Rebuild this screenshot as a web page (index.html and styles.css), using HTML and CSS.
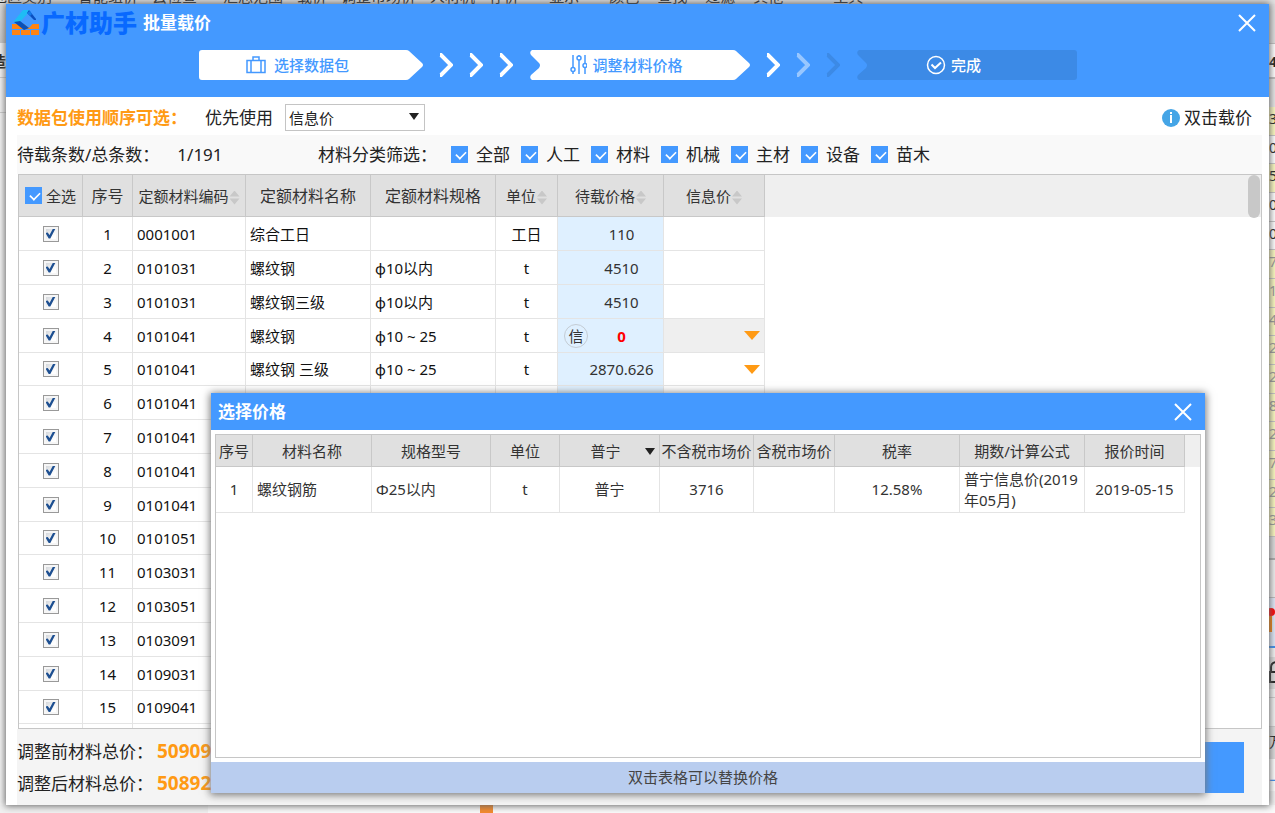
FILE: index.html
```html
<!DOCTYPE html>
<html lang="zh-CN">
<head>
<meta charset="utf-8">
<title>批量载价</title>
<link rel="stylesheet" href="styles.css">
</head>
<body>
<div class="desktop">
  <div class="ribbon">
    <span>地区类别</span><span class="ribbon-wide">智能组价</span><span>云检查</span><span class="ribbon-wide">汇总范围</span><span>载价</span><span>调整市场价</span><span>人材机</span><span>存价</span><span class="ribbon-far">显示</span><span class="ribbon-far">颜色</span><span class="ribbon-near">查找</span><span class="ribbon-near">过滤</span><span class="ribbon-near">其他</span><span class="ribbon-last">工具</span>
  </div>
  <div class="sheet-left"><div class="left-head"></div><div class="left-cell"><b>造</b></div><div class="left-cell"></div></div>
  <div class="sheet-right">
    <div class="r-head"></div>
    <div class="r-title"><b>47</b></div>
    <div class="r-sub"></div>
    <div class="r-rows">
      <span class="y">3</span><span>0</span><span class="y">5</span><span>0</span><span>0</span><span class="y dim">7</span><span class="y dim">1</span><span class="y dim">4</span><span class="y dim">2</span><span class="y dim">2</span><span class="y dim">8</span><span class="y dim">2</span><span class="y dim">7</span><span class="y dim">2</span><span class="y dim">3</span>
    </div>
    <div class="r-scroll"></div>
    <div class="r-gap"></div>
    <div class="r-tab"><svg viewBox="0 0 6 48" width="6" height="48"><path fill="#f57c00" d="M0 18h3v16H0z"/><circle cx="2" cy="14" r="4" fill="#f00"/></svg></div>
    <div class="r-lock"><svg viewBox="0 0 6 31" width="6" height="31" fill="none" stroke="#222" stroke-width="2"><path d="M8 11H1v10h7M2 10V6q0-4 5-5"/></svg></div>
    <div class="r-bar"></div>
    <div class="r-text">万</div>
    <div class="r-text r-link">上</div>
  </div>
  <div class="status"><i></i></div>
</div>

<main class="window">
  <header class="window-head">
    <div class="title-row">
      <svg class="logo" viewBox="0 0 28 26" width="28" height="26">
        <path fill="#ff8412" d="M0 14h27v5H0zM0 20h8v5H0zM9 20h9v5H9zM19 20h8v5h-8z"/>
        <path fill="#4499ff" d="M14 2l10 8-7 8-9-7z"/>
        <path fill="#1ebcf5" d="M11 0h6l1 1-10 11-6 0 0-1z"/>
        <path fill="#0b4fc0" d="M17 0l7 9v1h-2l-7-7z"/>
        <path fill="#0a50b8" d="M2 12l6-1 9 7-5 2z"/>
        <path fill="#1478e8" d="M15 3l3-2 2 3-2 2z"/>
      </svg>
      <span class="brand">广材助手</span>
      <h1>批量载价</h1>
      <button class="close" aria-label="关闭"><svg viewBox="0 0 20 20" width="20" height="20"><path d="M2 2l16 16M18 2L2 18"/></svg></button>
    </div>
    <div class="steps">
      <div class="step">
        <svg class="shape" viewBox="0 0 224 30" preserveAspectRatio="none"><path fill="#fff" d="M3 0h204q2 0 3 1l13 12q2 2 0 4l-13 12q-1 1-3 1H3q-3 0-3-3V3q0-3 3-3z"/></svg>
        <svg class="icon" viewBox="0 0 20 18" width="20" height="18"><path d="M1 4.500h18v12H1zM5 4.500v12M15 4.500v12M7 4V1h6v3"/></svg>
        <span>选择数据包</span>
      </div>
      <svg class="chevron" viewBox="0 0 15 24"><path d="M2 2l1 0 10 10-10 10H2"/></svg>
      <svg class="chevron" viewBox="0 0 15 24"><path d="M2 2l1 0 10 10-10 10H2"/></svg>
      <svg class="chevron" viewBox="0 0 15 24"><path d="M2 2l1 0 10 10-10 10H2"/></svg>
      <div class="step notched">
        <svg class="shape" viewBox="0 0 220 30" preserveAspectRatio="none"><path fill="#fff" d="M2 0h201q2 0 3 1l13 12q2 2 0 4l-13 12q-1 1-3 1H2q-3-2-1-5l8-7q2-3 0-5L1 5q-2-3 1-5z"/></svg>
        <svg class="icon" viewBox="0 0 17 20" width="17" height="20"><path d="M3 0v12M3 17v2M9 5v14M9 0v1M15 0v8M15 13v6"/><circle cx="3" cy="14.500" r="2"/><circle cx="9" cy="3" r="2"/><circle cx="15" cy="10.500" r="2"/></svg>
        <span>调整材料价格</span>
      </div>
      <svg class="chevron" viewBox="0 0 15 24"><path d="M2 2l1 0 10 10-10 10H2"/></svg>
      <svg class="chevron fade" viewBox="0 0 15 24"><path d="M2 2l1 0 10 10-10 10H2"/></svg>
      <svg class="chevron off" viewBox="0 0 15 24"><path d="M2 2l1 0 10 10-10 10H2"/></svg>
      <div class="step notched todo">
        <svg class="shape" viewBox="0 0 220 30" preserveAspectRatio="none"><path fill="#3c8ae6" d="M2 0h215q3 0 3 3v24q0 3-3 3H2q-3-2-1-5l8-7q2-3 0-5L1 5q-2-3 1-5z"/></svg>
        <svg class="icon" viewBox="0 0 20 20" width="20" height="20"><circle cx="10" cy="10" r="8.500"/><path d="M5.500 9.500l3.500 3.500 6-5.500" stroke-width="2"/></svg>
        <span>完成</span>
      </div>
    </div>
  </header>

  <div class="options">
    <strong>数据包使用顺序可选：</strong>
    <label for="prefer">优先使用</label>
    <span class="select-box"><select id="prefer"><option>信息价</option></select></span>
    <span class="hint"><svg viewBox="0 0 18 18" width="18" height="18"><circle cx="9" cy="9" r="9" fill="#45a5e6"/><path fill="#fff" d="M8 3h2v2H8zM8 6h2v8H8z"/></svg>双击载价</span>
  </div>

  <div class="content">
    <div class="filters">
      <span class="count">待载条数/总条数：<span>1/191</span></span>
      <span class="filter-name">材料分类筛选：</span>
      <label><input type="checkbox" class="tick" checked>全部</label>
      <label><input type="checkbox" class="tick" checked>人工</label>
      <label><input type="checkbox" class="tick" checked>材料</label>
      <label><input type="checkbox" class="tick" checked>机械</label>
      <label><input type="checkbox" class="tick" checked>主材</label>
      <label><input type="checkbox" class="tick" checked>设备</label>
      <label><input type="checkbox" class="tick" checked>苗木</label>
    </div>

    <div class="grid-box">
      <table class="grid">
        <colgroup><col class="w-check"><col class="w-no"><col class="w-code"><col class="w-text"><col class="w-text"><col class="w-unit"><col class="w-price"><col class="w-info"><col></colgroup>
        <thead>
          <tr>
            <th><label class="all"><input type="checkbox" class="tick" checked>全选</label></th>
            <th class="big">序号</th>
            <th>定额材料编码<i class="sort"></i></th>
            <th class="big">定额材料名称</th>
            <th class="big">定额材料规格</th>
            <th>单位<i class="sort"></i></th>
            <th>待载价格<i class="sort"></i></th>
            <th>信息价<i class="sort"></i></th>
            <th class="rest"></th>
          </tr>
        </thead>
        <tbody>
          <tr><td><input type="checkbox" class="box" aria-label="1" checked></td><td>1</td><td>0001001</td><td>综合工日</td><td></td><td>工日</td><td>110</td><td></td><td></td></tr>
          <tr><td><input type="checkbox" class="box" aria-label="2" checked></td><td>2</td><td>0101031</td><td>螺纹钢</td><td>φ10以内</td><td>t</td><td>4510</td><td></td><td></td></tr>
          <tr><td><input type="checkbox" class="box" aria-label="3" checked></td><td>3</td><td>0101031</td><td>螺纹钢三级</td><td>φ10以内</td><td>t</td><td>4510</td><td></td><td></td></tr>
          <tr><td><input type="checkbox" class="box" aria-label="4" checked></td><td>4</td><td>0101041</td><td>螺纹钢</td><td>φ10 ~ 25</td><td>t</td><td class="zero"><span class="badge">信</span>0</td><td class="current"><i class="drop"></i></td><td></td></tr>
          <tr><td><input type="checkbox" class="box" aria-label="5" checked></td><td>5</td><td>0101041</td><td>螺纹钢 三级</td><td>φ10 ~ 25</td><td>t</td><td>2870.626</td><td><i class="drop"></i></td><td></td></tr>
          <tr><td><input type="checkbox" class="box" aria-label="6" checked></td><td>6</td><td>0101041</td><td></td><td></td><td></td><td></td><td></td><td></td></tr>
          <tr><td><input type="checkbox" class="box" aria-label="7" checked></td><td>7</td><td>0101041</td><td></td><td></td><td></td><td></td><td></td><td></td></tr>
          <tr><td><input type="checkbox" class="box" aria-label="8" checked></td><td>8</td><td>0101041</td><td></td><td></td><td></td><td></td><td></td><td></td></tr>
          <tr><td><input type="checkbox" class="box" aria-label="9" checked></td><td>9</td><td>0101041</td><td></td><td></td><td></td><td></td><td></td><td></td></tr>
          <tr><td><input type="checkbox" class="box" aria-label="10" checked></td><td>10</td><td>0101051</td><td></td><td></td><td></td><td></td><td></td><td></td></tr>
          <tr><td><input type="checkbox" class="box" aria-label="11" checked></td><td>11</td><td>0103031</td><td></td><td></td><td></td><td></td><td></td><td></td></tr>
          <tr><td><input type="checkbox" class="box" aria-label="12" checked></td><td>12</td><td>0103051</td><td></td><td></td><td></td><td></td><td></td><td></td></tr>
          <tr><td><input type="checkbox" class="box" aria-label="13" checked></td><td>13</td><td>0103091</td><td></td><td></td><td></td><td></td><td></td><td></td></tr>
          <tr><td><input type="checkbox" class="box" aria-label="14" checked></td><td>14</td><td>0109031</td><td></td><td></td><td></td><td></td><td></td><td></td></tr>
          <tr><td><input type="checkbox" class="box" aria-label="15" checked></td><td>15</td><td>0109041</td><td></td><td></td><td></td><td></td><td></td><td></td></tr>
          <tr><td></td><td></td><td></td><td></td><td></td><td></td><td></td><td></td><td></td></tr>
        </tbody>
      </table>
      <div class="thumb"></div>
    </div>

    <footer class="totals">
      <div class="sums">
        <p>调整前材料总价：<b>50909</b></p>
        <p>调整后材料总价：<b>50892</b></p>
      </div>
      <button class="next" aria-label="下一步"></button>
    </footer>
  </div>
</main>

<section class="popup">
  <header class="popup-head">
    <h2>选择价格</h2>
    <button class="close" aria-label="关闭"><svg viewBox="0 0 20 20" width="20" height="20"><path d="M2 2l16 16M18 2L2 18"/></svg></button>
  </header>
  <div class="popup-body">
    <table class="prices">
      <colgroup><col class="p-no"><col class="p-name"><col class="p-name"><col class="p-unit"><col class="p-city"><col class="p-net"><col class="p-gross"><col class="p-term"><col class="p-term"><col class="p-date"><col></colgroup>
      <thead>
        <tr><th>序号</th><th>材料名称</th><th>规格型号</th><th>单位</th><th><span class="select-box city"><select aria-label="地区"><option>普宁</option></select></span></th><th>不含税市场价</th><th>含税市场价</th><th>税率</th><th>期数/计算公式</th><th>报价时间</th><th class="rest"></th></tr>
      </thead>
      <tbody>
        <tr><td>1</td><td class="left">螺纹钢筋</td><td class="left">Φ25以内</td><td>t</td><td>普宁</td><td>3716</td><td></td><td>12.58%</td><td class="left">普宁信息价(2019年05月)</td><td>2019-05-15</td><td></td></tr>
      </tbody>
    </table>
  </div>
  <footer class="popup-foot">双击表格可以替换价格</footer>
</section>
</body>
</html>
```

FILE: styles.css
```css
* { box-sizing: border-box; }
body {
  margin: 0;
  min-height: 100vh;
  overflow: hidden;
  font: 15px/20px "Noto Sans", "Noto Sans CJK SC", sans-serif;
  color: #222;
}
h1, h2, p { margin: 0; }
button { border: 0; padding: 0; background: none; }
svg { display: block; flex: none; }

/* Application behind the dialog */
.desktop {
  position: absolute;
  inset: 0;
  display: grid;
  grid-template: 4px 1fr 8px / 6px 1fr 6px;
  background: #f3f3f3;
}
.ribbon {
  grid-column: 1 / -1;
  display: flex;
  align-items: flex-end;
  gap: 14px;
  overflow: hidden;
  white-space: nowrap;
  background: #e2e2e2;
  line-height: 16px;
  margin-left: -8px;
}
.ribbon-wide { margin-left: 12px; }
.ribbon-far { margin-left: 16px; }
.ribbon-far:first-of-type, .ribbon-near { margin-left: 4px; }
.ribbon-last { margin-left: 36px; }
.sheet-left { grid-column: 1; overflow: hidden; }
.left-head { height: 39px; background: linear-gradient(#dcdcdc, #c8c8c8); }
.left-cell { height: 35px; padding-top: 8px; border-bottom: 1px solid #ccc; overflow: hidden; direction: rtl; }
.sheet-right { grid-column: 3; overflow: hidden; font-size: 14px; }
.r-head { height: 40px; background: #dedede; border-bottom: 1px solid #c0c0c0; }
.r-title { height: 35px; padding-top: 8px; background: #fff; border-bottom: 2px solid #bbb; }
.r-sub { height: 28px; background: #e6e6e6; }
.r-rows { height: 430px; display: flex; flex-direction: column; }
.r-rows span { flex: 1; padding-top: 2px; background: #fff; border-bottom: 1px solid #c4c4c4; }
.r-rows .y { background: #fcfac0; }
.r-rows .dim { color: #999; }
.r-scroll { height: 23px; background: #dcdcdc; border-bottom: 2px solid #aaa; }
.r-gap { height: 38px; border-bottom: 1px solid #bbb; background: #eee; }
.r-tab { height: 50px; background: #dfe8f8; border-bottom: 2px solid #3c8ef0; }
.r-lock { height: 40px; margin-top: 9px; background: #ddd; padding-top: 4px; border-bottom: 8px solid #f3f3f3; }
.r-bar { height: 30px; border: solid #ccc; border-width: 1px 0; }
.r-text { height: 32px; padding-top: 5px; background: #ddd; }
.r-link { background: #fff; color: #3c8ef0; font-size: 17px; }
.status { grid-column: 1 / -1; padding-left: 480px; background: linear-gradient(90deg, #f1f1f1 208px, #fbfbfb 208px); }
.status i { display: block; width: 13px; height: 8px; background: #f58a2c; }

/* Dialog */
.window {
  position: absolute;
  inset: 4px 6px 8px;
  display: flex;
  flex-direction: column;
  background: #fff;
  box-shadow: 0 0 7px 1px #666;
}
.window-head { background: #49f; padding-bottom: 17px; color: #fff; }
.title-row { display: flex; align-items: center; height: 38px; margin-bottom: 8px; padding: 0 12px 0 6px; }
.brand { font-size: 24px; line-height: 30px; font-weight: 900; color: #0869ff; margin: 0 6px 0 1px; }
h1, h2 { font-size: 17px; font-weight: 700; }
.close { margin-left: auto; cursor: pointer; }
.close path { fill: none; stroke: #fff; stroke-width: 2; }
.steps { display: flex; justify-content: center; align-items: center; gap: 15px; }
.step {
  position: relative;
  display: flex;
  align-items: center;
  justify-content: center;
  gap: 8px;
  flex: 0 1 224px;
  height: 30px;
  padding-right: 26px;
  color: #49f;
  font-weight: 500;
}
.step.notched { flex-basis: 220px; margin-left: 2px; gap: 5px; padding-right: 26px; }
.step.todo { color: #fff; }
.shape { position: absolute; inset: 0; width: 100%; height: 100%; }
.step span, .icon { position: relative; }
.icon { fill: none; stroke: currentColor; stroke-width: 1.500; }
.chevron { width: 15px; height: 24px; fill: none; stroke: #fff; stroke-width: 4; }
.fade { opacity: .45; }
.off { stroke: #3c8ae6; }

.options { display: flex; align-items: center; height: 38px; padding: 3px 17px 0 11px; font-size: 17px; }
.options strong { color: #ff9a14; width: 188px; }
.select-box { position: relative; display: inline-block; margin-left: 12px; }
.select-box::after {
  content: "";
  position: absolute;
  right: 6px;
  top: 9px;
  border: solid transparent;
  border-width: 7px 5px 0;
  border-top-color: #222;
  pointer-events: none;
}
select { appearance: none; display: block; font: inherit; color: inherit; background: #fff; border: 1px solid #c4c4c4; border-radius: 0; }
.options select { width: 140px; height: 27px; padding: 0 3px; }
.options .select-box { font-size: 15px; }
.hint { display: flex; align-items: center; gap: 4px; margin-left: auto; }

.content { flex: 1; display: flex; flex-direction: column; min-height: 0; margin: 0 7px 0 11px; }
.filters { display: flex; align-items: center; gap: 11px; height: 39px; background: #f9f9f9; font-size: 17px; }
.filters label { display: flex; align-items: center; gap: 8px; }
.count { width: 290px; }
.count span { margin-left: 18px; }
.filter-name { width: 122px; }
.tick { appearance: none; flex: none; margin: 0; width: 17px; height: 17px; background: #49f; }
.tick::before {
  content: "";
  display: block;
  width: 10px;
  height: 6px;
  margin: 4px 0 0 4px;
  border: solid #fff;
  border-width: 0 0 2px 2px;
  transform: rotate(-45deg) scale(.8);
}

.grid-box { position: relative; flex: 1; min-height: 0; overflow: hidden; border: 1px solid #c6c6c6; margin-left: 1px; }
table { width: 100%; table-layout: fixed; border-collapse: separate; border-spacing: 0; }
th, td { padding: 0; border: solid #e4e4e4; border-width: 0 1px 1px 0; text-align: center; font-weight: 400; }
th { background: #e0e0e0; border-color: #c8c8c8; color: #333; white-space: nowrap; }
th.rest { background: #efefef; border: 0; }
td:last-child { border: 0; }
.grid th { height: 42px; }
.grid tr { height: 34px; }
.grid tbody tr:nth-child(5n) { height: 33px; }
.w-check { width: 64px; }
.w-no { width: 50px; }
.w-code { width: 113px; }
.w-text { width: 125px; }
.w-unit { width: 62px; }
.w-price { width: 106px; }
.w-info { width: 101px; }
.big { font-size: 16px; }
.grid td { color: #111; }
.grid td:nth-child(3), .grid td:nth-child(4), .grid td:nth-child(5) { text-align: left; padding-left: 4px; }
.grid td:nth-child(7) { position: relative; background: #dff0ff; padding-left: 22px; color: #333; }
.grid td.current { background: #efefef; }
.grid td.zero { color: #f00; font-weight: 700; }
.all { display: flex; align-items: center; justify-content: center; gap: 4px; }
.sort { display: inline-block; width: 10px; height: 14px; margin-left: 1px; vertical-align: -3px; background: #c8c8c8; clip-path: polygon(50% 0, 100% 42%, 0 42%, 0 58%, 100% 58%, 50% 100%, 0 58%, 0 42%); }
.box { appearance: none; display: block; width: 16px; height: 16px; margin: 0 auto; border: 1px solid #999; background: linear-gradient(135deg, #c9cdd2, #fff 70%); box-shadow: inset 0 0 0 2px #f6f6f6; }
.box::before { content: ""; display: block; width: 10px; height: 10px; margin: 2px; background: #1d4f91; clip-path: polygon(0 45%, 22% 40%, 40% 65%, 75% 0, 100% 0, 48% 100%, 32% 100%); }
.badge { position: absolute; left: 6px; top: 5px; width: 24px; height: 24px; line-height: 22px; border: 1px solid #c4ccd4; border-radius: 50%; color: #333; font-weight: 400; }
.drop { display: block; width: 0; margin: 0 4px 0 auto; border: solid transparent; border-width: 9px 8px 0; border-top-color: #ff9a14; }
.thumb { position: absolute; right: 1px; top: 0; width: 12px; height: 43px; border-radius: 6px; background: #c8c8c8; }

.totals { display: flex; justify-content: space-between; align-items: center; height: 76px; padding-right: 18px; background: #f4f4f4; font-size: 17px; }
.sums { display: grid; gap: 11px; }
.sums b { margin-left: 4px; font-size: 19px; color: #ff9a14; }
.next { width: 180px; height: 51px; background: #49f; }

/* Price picker */
.popup { position: absolute; inset: 393px 70px 20px 211px; display: flex; flex-direction: column; background: #fff; box-shadow: 0 1px 8px 1px #777; }
.popup-head { display: flex; align-items: center; height: 37px; padding: 0 12px 0 7px; background: #49f; color: #fff; }
.popup-body { flex: 1; margin: 4px; border: 1px solid #c6c6c6; }
.popup-foot { height: 31px; padding-right: 10px; line-height: 30px; background: #b9cdef; text-align: center; color: #444; }
.prices td { height: 46px; line-height: 21px; color: #333; }
.prices th { height: 32px; }
.prices .left { text-align: left; padding: 0 4px; }
.p-no { width: 37px; }
.p-name { width: 119px; }
.p-unit { width: 69px; }
.p-city { width: 100px; }
.p-net { width: 94px; }
.p-gross { width: 81px; }
.p-term { width: 125px; }
.p-date { width: 100px; }
.city { display: block; margin: 0; }
.city::after { right: 4px; top: 7px; }
.city select { width: 100%; padding: 0 8px 0 0; border: 0; background: transparent; text-align: center; text-align-last: center; }
```
